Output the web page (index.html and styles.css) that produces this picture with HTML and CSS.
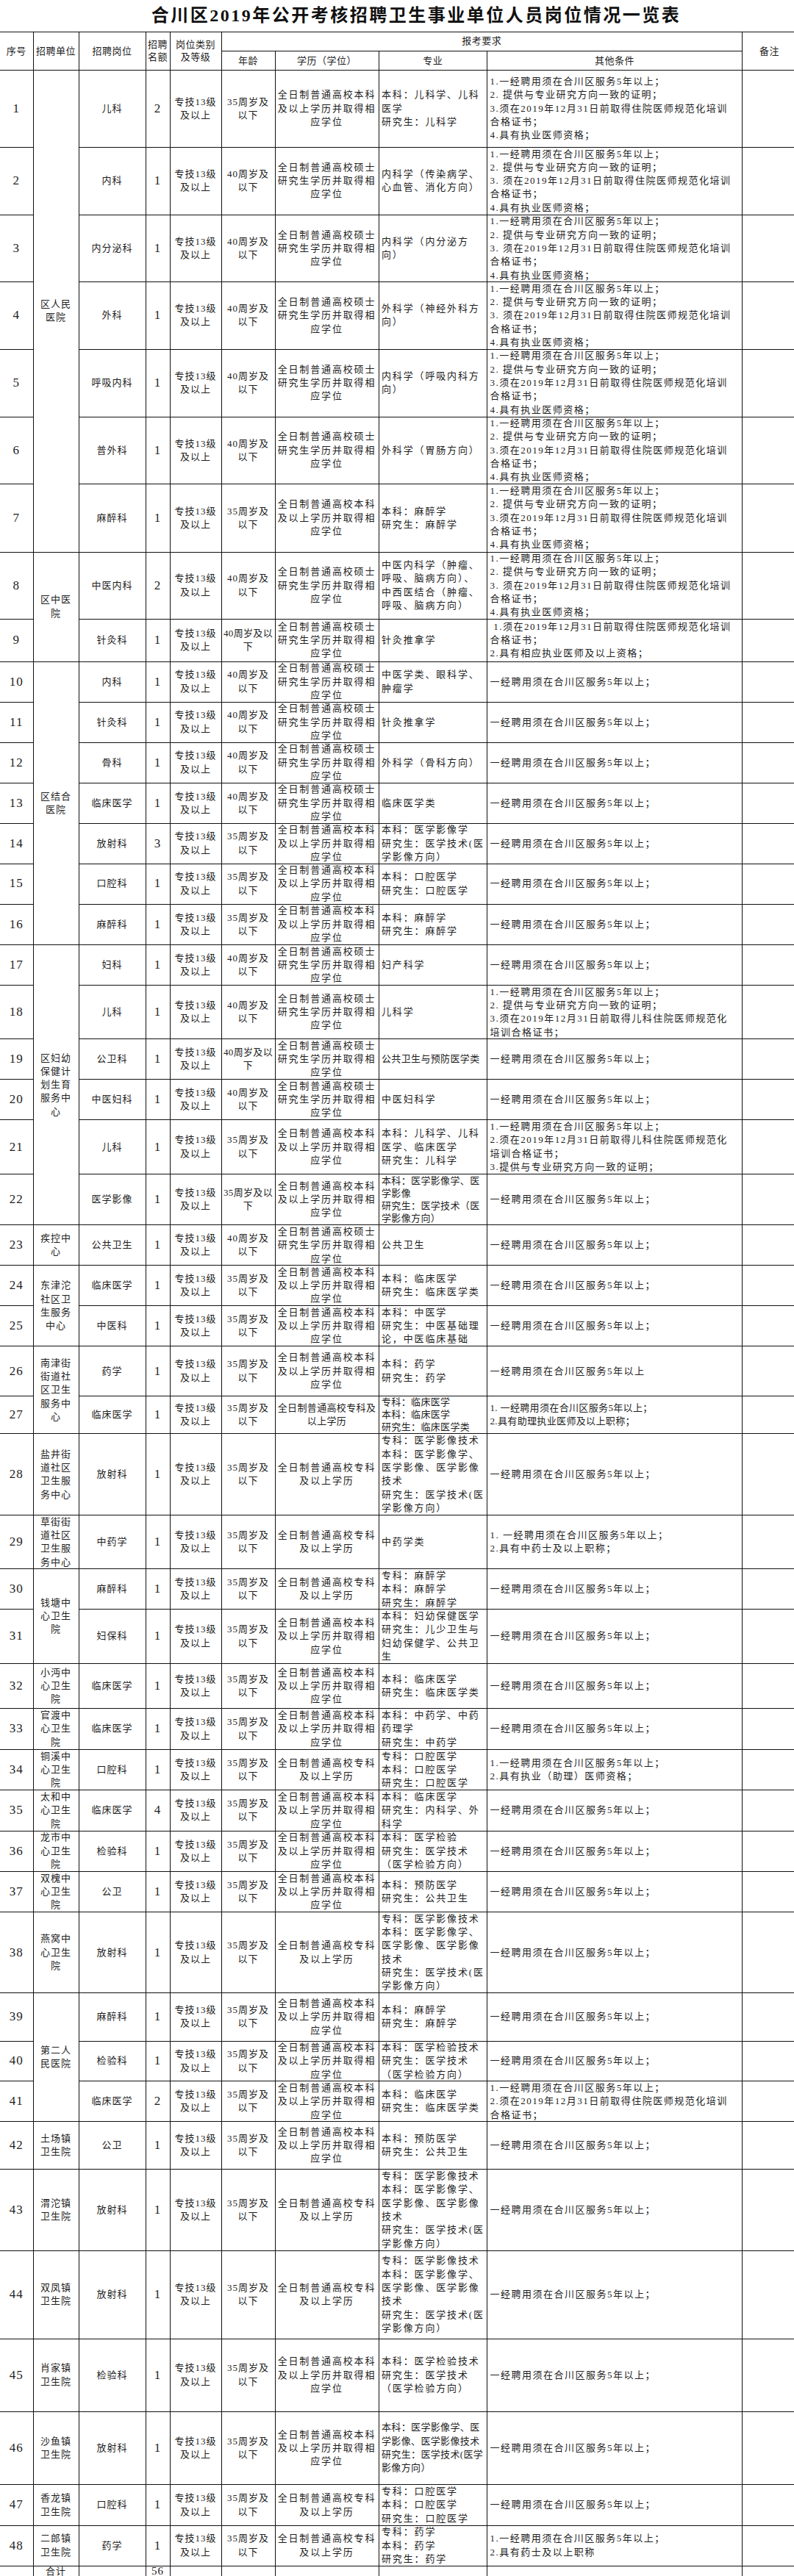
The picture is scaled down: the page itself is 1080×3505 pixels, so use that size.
FILE: index.html
```html
<!DOCTYPE html>
<html lang="zh-CN">
<head>
<meta charset="utf-8">
<title>合川区2019年公开考核招聘卫生事业单位人员岗位情况一览表</title>
<link rel="stylesheet" href="styles.css">
</head>
<body>
<div class="page">
<h1 class="title">合川区2019年公开考核招聘卫生事业单位人员岗位情况一览表</h1>
<div class="sheet">
<div class="hd hs">序号</div>
<div class="hd hs">招聘单位</div>
<div class="hd hs">招聘岗位</div>
<div class="hd hs">招聘
名额</div>
<div class="hd hs">岗位类别
及等级</div>
<div class="hd hc4">报考要求</div>
<div class="hd hs">备注</div>
<div class="hd">年龄</div>
<div class="hd">学历（学位）</div>
<div class="hd">专业</div>
<div class="hd">其他条件</div>

<div class="n">1</div>
<div class="sp7">区人民
医院</div>
<div>儿科</div>
<div class="n">2</div>
<div>专技13级
及以上</div>
<div>35周岁及
以下</div>
<div class="w">全日制普通高校本科
及以上学历并取得相
应学位</div>
<div class="m">本科：儿科学、儿科
医学
研究生：儿科学</div>
<div class="o">1.一经聘用须在合川区服务5年以上；
2. 提供与专业研究方向一致的证明；
3.须在2019年12月31日前取得住院医师规范化培训
合格证书；
4.具有执业医师资格；</div>
<div></div>

<div class="n">2</div>
<div>内科</div>
<div class="n">1</div>
<div>专技13级
及以上</div>
<div>40周岁及
以下</div>
<div class="w">全日制普通高校硕士
研究生学历并取得相
应学位</div>
<div class="m">内科学（传染病学、
心血管、消化方向）</div>
<div class="o">1.一经聘用须在合川区服务5年以上；
2. 提供与专业研究方向一致的证明；
3. 须在2019年12月31日前取得住院医师规范化培训
合格证书；
4.具有执业医师资格；</div>
<div></div>

<div class="n">3</div>
<div>内分泌科</div>
<div class="n">1</div>
<div>专技13级
及以上</div>
<div>40周岁及
以下</div>
<div class="w">全日制普通高校硕士
研究生学历并取得相
应学位</div>
<div class="m">内科学（内分泌方
向）</div>
<div class="o">1.一经聘用须在合川区服务5年以上；
2. 提供与专业研究方向一致的证明；
3. 须在2019年12月31日前取得住院医师规范化培训
合格证书；
4.具有执业医师资格；</div>
<div></div>

<div class="n">4</div>
<div>外科</div>
<div class="n">1</div>
<div>专技13级
及以上</div>
<div>40周岁及
以下</div>
<div class="w">全日制普通高校硕士
研究生学历并取得相
应学位</div>
<div class="m">外科学（神经外科方
向）</div>
<div class="o">1.一经聘用须在合川区服务5年以上；
2. 提供与专业研究方向一致的证明；
3. 须在2019年12月31日前取得住院医师规范化培训
合格证书；
4.具有执业医师资格；</div>
<div></div>

<div class="n">5</div>
<div>呼吸内科</div>
<div class="n">1</div>
<div>专技13级
及以上</div>
<div>40周岁及
以下</div>
<div class="w">全日制普通高校硕士
研究生学历并取得相
应学位</div>
<div class="m">内科学（呼吸内科方
向）</div>
<div class="o">1.一经聘用须在合川区服务5年以上；
2. 提供与专业研究方向一致的证明；
3.须在2019年12月31日前取得住院医师规范化培训
合格证书；
4.具有执业医师资格；</div>
<div></div>

<div class="n">6</div>
<div>普外科</div>
<div class="n">1</div>
<div>专技13级
及以上</div>
<div>40周岁及
以下</div>
<div class="w">全日制普通高校硕士
研究生学历并取得相
应学位</div>
<div class="m">外科学（胃肠方向）</div>
<div class="o">1.一经聘用须在合川区服务5年以上；
2. 提供与专业研究方向一致的证明；
3.须在2019年12月31日前取得住院医师规范化培训
合格证书；
4.具有执业医师资格；</div>
<div></div>

<div class="n">7</div>
<div>麻醉科</div>
<div class="n">1</div>
<div>专技13级
及以上</div>
<div>35周岁及
以下</div>
<div class="w">全日制普通高校本科
及以上学历并取得相
应学位</div>
<div class="m">本科：麻醉学
研究生：麻醉学</div>
<div class="o">1.一经聘用须在合川区服务5年以上；
2. 提供与专业研究方向一致的证明；
3.须在2019年12月31日前取得住院医师规范化培训
合格证书；
4.具有执业医师资格；</div>
<div></div>

<div class="n">8</div>
<div class="sp2">区中医
院</div>
<div>中医内科</div>
<div class="n">2</div>
<div>专技13级
及以上</div>
<div>40周岁及
以下</div>
<div class="w">全日制普通高校硕士
研究生学历并取得相
应学位</div>
<div class="m">中医内科学（肿瘤、
呼吸、脑病方向）、
中西医结合（肿瘤、
呼吸、脑病方向）</div>
<div class="o">1.一经聘用须在合川区服务5年以上；
2. 提供与专业研究方向一致的证明；
3. 须在2019年12月31日前取得住院医师规范化培训
合格证书；
4.具有执业医师资格；</div>
<div></div>

<div class="n">9</div>
<div>针灸科</div>
<div class="n">1</div>
<div>专技13级
及以上</div>
<div class="k">40周岁及以
下</div>
<div class="w">全日制普通高校硕士
研究生学历并取得相
应学位</div>
<div class="m">针灸推拿学</div>
<div class="o"> 1.须在2019年12月31日前取得住院医师规范化培训
合格证书；
2.具有相应执业医师及以上资格；</div>
<div></div>

<div class="n">10</div>
<div class="sp7">区结合
医院</div>
<div>内科</div>
<div class="n">1</div>
<div>专技13级
及以上</div>
<div>40周岁及
以下</div>
<div class="w">全日制普通高校硕士
研究生学历并取得相
应学位</div>
<div class="m">中医学类、眼科学、
肿瘤学</div>
<div class="o">一经聘用须在合川区服务5年以上；</div>
<div></div>

<div class="n">11</div>
<div>针灸科</div>
<div class="n">1</div>
<div>专技13级
及以上</div>
<div>40周岁及
以下</div>
<div class="w">全日制普通高校硕士
研究生学历并取得相
应学位</div>
<div class="m">针灸推拿学</div>
<div class="o">一经聘用须在合川区服务5年以上；</div>
<div></div>

<div class="n">12</div>
<div>骨科</div>
<div class="n">1</div>
<div>专技13级
及以上</div>
<div>40周岁及
以下</div>
<div class="w">全日制普通高校硕士
研究生学历并取得相
应学位</div>
<div class="m">外科学（骨科方向）</div>
<div class="o">一经聘用须在合川区服务5年以上；</div>
<div></div>

<div class="n">13</div>
<div>临床医学</div>
<div class="n">1</div>
<div>专技13级
及以上</div>
<div>40周岁及
以下</div>
<div class="w">全日制普通高校硕士
研究生学历并取得相
应学位</div>
<div class="m">临床医学类</div>
<div class="o">一经聘用须在合川区服务5年以上；</div>
<div></div>

<div class="n">14</div>
<div>放射科</div>
<div class="n">3</div>
<div>专技13级
及以上</div>
<div>35周岁及
以下</div>
<div class="w">全日制普通高校本科
及以上学历并取得相
应学位</div>
<div class="m">本科：医学影像学
研究生：医学技术(医
学影像方向）</div>
<div class="o">一经聘用须在合川区服务5年以上；</div>
<div></div>

<div class="n">15</div>
<div>口腔科</div>
<div class="n">1</div>
<div>专技13级
及以上</div>
<div>35周岁及
以下</div>
<div class="w">全日制普通高校本科
及以上学历并取得相
应学位</div>
<div class="m">本科：口腔医学
研究生：口腔医学</div>
<div class="o">一经聘用须在合川区服务5年以上；</div>
<div></div>

<div class="n">16</div>
<div>麻醉科</div>
<div class="n">1</div>
<div>专技13级
及以上</div>
<div>35周岁及
以下</div>
<div class="w">全日制普通高校本科
及以上学历并取得相
应学位</div>
<div class="m">本科：麻醉学
研究生：麻醉学</div>
<div class="o">一经聘用须在合川区服务5年以上；</div>
<div></div>

<div class="n">17</div>
<div class="sp6">区妇幼
保健计
划生育
服务中
心</div>
<div>妇科</div>
<div class="n">1</div>
<div>专技13级
及以上</div>
<div>40周岁及
以下</div>
<div class="w">全日制普通高校硕士
研究生学历并取得相
应学位</div>
<div class="m">妇产科学</div>
<div class="o">一经聘用须在合川区服务5年以上；</div>
<div></div>

<div class="n">18</div>
<div>儿科</div>
<div class="n">1</div>
<div>专技13级
及以上</div>
<div>40周岁及
以下</div>
<div class="w">全日制普通高校硕士
研究生学历并取得相
应学位</div>
<div class="m">儿科学</div>
<div class="o">1.一经聘用须在合川区服务5年以上；
2. 提供与专业研究方向一致的证明；
3.须在2019年12月31日前取得儿科住院医师规范化
培训合格证书；</div>
<div></div>

<div class="n">19</div>
<div>公卫科</div>
<div class="n">1</div>
<div>专技13级
及以上</div>
<div class="k">40周岁及以
下</div>
<div class="w">全日制普通高校硕士
研究生学历并取得相
应学位</div>
<div class="m k">公共卫生与预防医学类</div>
<div class="o">一经聘用须在合川区服务5年以上；</div>
<div></div>

<div class="n">20</div>
<div>中医妇科</div>
<div class="n">1</div>
<div>专技13级
及以上</div>
<div>40周岁及
以下</div>
<div class="w">全日制普通高校硕士
研究生学历并取得相
应学位</div>
<div class="m">中医妇科学</div>
<div class="o">一经聘用须在合川区服务5年以上；</div>
<div></div>

<div class="n">21</div>
<div>儿科</div>
<div class="n">1</div>
<div>专技13级
及以上</div>
<div>35周岁及
以下</div>
<div class="w">全日制普通高校本科
及以上学历并取得相
应学位</div>
<div class="m">本科：儿科学、儿科
医学、临床医学
研究生：儿科学</div>
<div class="o">1.一经聘用须在合川区服务5年以上；
2.须在2019年12月31日前取得儿科住院医师规范化
培训合格证书；
3.提供与专业研究方向一致的证明；</div>
<div></div>

<div class="n">22</div>
<div>医学影像</div>
<div class="n">1</div>
<div>专技13级
及以上</div>
<div class="k">35周岁及以
下</div>
<div class="w">全日制普通高校本科
及以上学历并取得相
应学位</div>
<div class="m k t17">本科：医学影像学、医
学影像
研究生：医学技术（医
学影像方向）</div>
<div class="o">一经聘用须在合川区服务5年以上；</div>
<div></div>

<div class="n">23</div>
<div>疾控中
心</div>
<div>公共卫生</div>
<div class="n">1</div>
<div>专技13级
及以上</div>
<div>40周岁及
以下</div>
<div class="w">全日制普通高校硕士
研究生学历并取得相
应学位</div>
<div class="m">公共卫生</div>
<div class="o">一经聘用须在合川区服务5年以上；</div>
<div></div>

<div class="n">24</div>
<div class="sp2">东津沱
社区卫
生服务
中心</div>
<div>临床医学</div>
<div class="n">1</div>
<div>专技13级
及以上</div>
<div>35周岁及
以下</div>
<div class="w">全日制普通高校本科
及以上学历并取得相
应学位</div>
<div class="m">本科：临床医学
研究生：临床医学类</div>
<div class="o">一经聘用须在合川区服务5年以上；</div>
<div></div>

<div class="n">25</div>
<div>中医科</div>
<div class="n">1</div>
<div>专技13级
及以上</div>
<div>35周岁及
以下</div>
<div class="w">全日制普通高校本科
及以上学历并取得相
应学位</div>
<div class="m">本科：中医学
研究生：中医基础理
论，中医临床基础</div>
<div class="o">一经聘用须在合川区服务5年以上；</div>
<div></div>

<div class="n">26</div>
<div class="sp2">南津街
街道社
区卫生
服务中
心</div>
<div>药学</div>
<div class="n">1</div>
<div>专技13级
及以上</div>
<div>35周岁及
以下</div>
<div class="w">全日制普通高校本科
及以上学历并取得相
应学位</div>
<div class="m">本科：药学
研究生：药学</div>
<div class="o">一经聘用须在合川区服务5年以上</div>
<div></div>

<div class="n">27</div>
<div>临床医学</div>
<div class="n">1</div>
<div>专技13级
及以上</div>
<div>35周岁及
以下</div>
<div class="w k">全日制普通高校专科及
以上学历</div>
<div class="m k t">专科：临床医学
本科：临床医学
研究生：临床医学类</div>
<div class="o k">1. 一经聘用须在合川区服务5年以上；
2.具有助理执业医师及以上职称；</div>
<div></div>

<div class="n">28</div>
<div>盐井街
道社区
卫生服
务中心</div>
<div>放射科</div>
<div class="n">1</div>
<div>专技13级
及以上</div>
<div>35周岁及
以下</div>
<div class="w">全日制普通高校专科
及以上学历</div>
<div class="m">专科：医学影像技术
本科：医学影像学、
医学影像、医学影像
技术
研究生：医学技术(医
学影像方向）</div>
<div class="o">一经聘用须在合川区服务5年以上；</div>
<div></div>

<div class="n">29</div>
<div>草街街
道社区
卫生服
务中心</div>
<div>中药学</div>
<div class="n">1</div>
<div>专技13级
及以上</div>
<div>35周岁及
以下</div>
<div class="w">全日制普通高校专科
及以上学历</div>
<div class="m">中药学类</div>
<div class="o">1. 一经聘用须在合川区服务5年以上；
2.具有中药士及以上职称；</div>
<div></div>

<div class="n">30</div>
<div class="sp2">钱塘中
心卫生
院</div>
<div>麻醉科</div>
<div class="n">1</div>
<div>专技13级
及以上</div>
<div>35周岁及
以下</div>
<div class="w">全日制普通高校专科
及以上学历</div>
<div class="m">专科：麻醉学
本科：麻醉学
研究生：麻醉学</div>
<div class="o">一经聘用须在合川区服务5年以上；</div>
<div></div>

<div class="n">31</div>
<div>妇保科</div>
<div class="n">1</div>
<div>专技13级
及以上</div>
<div>35周岁及
以下</div>
<div class="w">全日制普通高校本科
及以上学历并取得相
应学位</div>
<div class="m">本科：妇幼保健医学
研究生：儿少卫生与
妇幼保健学、公共卫
生</div>
<div class="o">一经聘用须在合川区服务5年以上；</div>
<div></div>

<div class="n">32</div>
<div>小沔中
心卫生
院</div>
<div>临床医学</div>
<div class="n">1</div>
<div>专技13级
及以上</div>
<div>35周岁及
以下</div>
<div class="w">全日制普通高校本科
及以上学历并取得相
应学位</div>
<div class="m">本科：临床医学
研究生：临床医学类</div>
<div class="o">一经聘用须在合川区服务5年以上；</div>
<div></div>

<div class="n">33</div>
<div>官渡中
心卫生
院</div>
<div>临床医学</div>
<div class="n">1</div>
<div>专技13级
及以上</div>
<div>35周岁及
以下</div>
<div class="w">全日制普通高校本科
及以上学历并取得相
应学位</div>
<div class="m">本科：中药学、中药
药理学
研究生：中药学</div>
<div class="o">一经聘用须在合川区服务5年以上；</div>
<div></div>

<div class="n">34</div>
<div>铜溪中
心卫生
院</div>
<div>口腔科</div>
<div class="n">1</div>
<div>专技13级
及以上</div>
<div>35周岁及
以下</div>
<div class="w">全日制普通高校专科
及以上学历</div>
<div class="m">专科：口腔医学
本科：口腔医学
研究生：口腔医学</div>
<div class="o">1.一经聘用须在合川区服务5年以上；
2.具有执业（助理）医师资格；</div>
<div></div>

<div class="n">35</div>
<div>太和中
心卫生
院</div>
<div>临床医学</div>
<div class="n">4</div>
<div>专技13级
及以上</div>
<div>35周岁及
以下</div>
<div class="w">全日制普通高校本科
及以上学历并取得相
应学位</div>
<div class="m">本科：临床医学
研究生：内科学、外
科学</div>
<div class="o">一经聘用须在合川区服务5年以上；</div>
<div></div>

<div class="n">36</div>
<div>龙市中
心卫生
院</div>
<div>检验科</div>
<div class="n">1</div>
<div>专技13级
及以上</div>
<div>35周岁及
以下</div>
<div class="w">全日制普通高校本科
及以上学历并取得相
应学位</div>
<div class="m">本科：医学检验
研究生：医学技术
（医学检验方向）</div>
<div class="o">一经聘用须在合川区服务5年以上；</div>
<div></div>

<div class="n">37</div>
<div>双槐中
心卫生
院</div>
<div>公卫</div>
<div class="n">1</div>
<div>专技13级
及以上</div>
<div>35周岁及
以下</div>
<div class="w">全日制普通高校本科
及以上学历并取得相
应学位</div>
<div class="m">本科：预防医学
研究生：公共卫生</div>
<div class="o">一经聘用须在合川区服务5年以上；</div>
<div></div>

<div class="n">38</div>
<div>燕窝中
心卫生
院</div>
<div>放射科</div>
<div class="n">1</div>
<div>专技13级
及以上</div>
<div>35周岁及
以下</div>
<div class="w">全日制普通高校专科
及以上学历</div>
<div class="m">专科：医学影像技术
本科：医学影像学、
医学影像、医学影像
技术
研究生：医学技术(医
学影像方向）</div>
<div class="o">一经聘用须在合川区服务5年以上；</div>
<div></div>

<div class="n">39</div>
<div class="sp3">第二人
民医院</div>
<div>麻醉科</div>
<div class="n">1</div>
<div>专技13级
及以上</div>
<div>35周岁及
以下</div>
<div class="w">全日制普通高校本科
及以上学历并取得相
应学位</div>
<div class="m">本科：麻醉学
研究生：麻醉学</div>
<div class="o">一经聘用须在合川区服务5年以上；</div>
<div></div>

<div class="n">40</div>
<div>检验科</div>
<div class="n">1</div>
<div>专技13级
及以上</div>
<div>35周岁及
以下</div>
<div class="w">全日制普通高校本科
及以上学历并取得相
应学位</div>
<div class="m">本科：医学检验技术
研究生：医学技术
（医学检验方向）</div>
<div class="o">一经聘用须在合川区服务5年以上；</div>
<div></div>

<div class="n">41</div>
<div>临床医学</div>
<div class="n">2</div>
<div>专技13级
及以上</div>
<div>35周岁及
以下</div>
<div class="w">全日制普通高校本科
及以上学历并取得相
应学位</div>
<div class="m">本科：临床医学
研究生：临床医学类</div>
<div class="o">1.一经聘用须在合川区服务5年以上；
2.须在2019年12月31日前取得住院医师规范化培训
合格证书；</div>
<div></div>

<div class="n">42</div>
<div>土场镇
卫生院</div>
<div>公卫</div>
<div class="n">1</div>
<div>专技13级
及以上</div>
<div>35周岁及
以下</div>
<div class="w">全日制普通高校本科
及以上学历并取得相
应学位</div>
<div class="m">本科：预防医学
研究生：公共卫生</div>
<div class="o">一经聘用须在合川区服务5年以上；</div>
<div></div>

<div class="n">43</div>
<div>渭沱镇
卫生院</div>
<div>放射科</div>
<div class="n">1</div>
<div>专技13级
及以上</div>
<div>35周岁及
以下</div>
<div class="w">全日制普通高校专科
及以上学历</div>
<div class="m">专科：医学影像技术
本科：医学影像学、
医学影像、医学影像
技术
研究生：医学技术(医
学影像方向）</div>
<div class="o">一经聘用须在合川区服务5年以上；</div>
<div></div>

<div class="n">44</div>
<div>双凤镇
卫生院</div>
<div>放射科</div>
<div class="n">1</div>
<div>专技13级
及以上</div>
<div>35周岁及
以下</div>
<div class="w">全日制普通高校专科
及以上学历</div>
<div class="m">专科：医学影像技术
本科：医学影像学、
医学影像、医学影像
技术
研究生：医学技术(医
学影像方向）</div>
<div class="o">一经聘用须在合川区服务5年以上；</div>
<div></div>

<div class="n">45</div>
<div>肖家镇
卫生院</div>
<div>检验科</div>
<div class="n">1</div>
<div>专技13级
及以上</div>
<div>35周岁及
以下</div>
<div class="w">全日制普通高校本科
及以上学历并取得相
应学位</div>
<div class="m">本科：医学检验技术
研究生：医学技术
（医学检验方向）</div>
<div class="o">一经聘用须在合川区服务5年以上；</div>
<div></div>

<div class="n">46</div>
<div>沙鱼镇
卫生院</div>
<div>放射科</div>
<div class="n">1</div>
<div>专技13级
及以上</div>
<div>35周岁及
以下</div>
<div class="w">全日制普通高校本科
及以上学历并取得相
应学位</div>
<div class="m k">本科：医学影像学、医
学影像、医学影像技术
研究生：医学技术(医学
影像方向）</div>
<div class="o">一经聘用须在合川区服务5年以上；</div>
<div></div>

<div class="n">47</div>
<div>香龙镇
卫生院</div>
<div>口腔科</div>
<div class="n">1</div>
<div>专技13级
及以上</div>
<div>35周岁及
以下</div>
<div class="w">全日制普通高校专科
及以上学历</div>
<div class="m">专科：口腔医学
本科：口腔医学
研究生：口腔医学</div>
<div class="o">一经聘用须在合川区服务5年以上；</div>
<div></div>

<div class="n">48</div>
<div>二郎镇
卫生院</div>
<div>药学</div>
<div class="n">1</div>
<div>专技13级
及以上</div>
<div>35周岁及
以下</div>
<div class="w">全日制普通高校专科
及以上学历</div>
<div class="m">专科：药学
本科：药学
研究生：药学</div>
<div class="o">1.一经聘用须在合川区服务5年以上；
2.具有药士及以上职称</div>
<div></div>

<div class="f"></div>
<div class="f">合计</div>
<div class="f"></div>
<div class="f fn">56</div>
<div class="f"></div>
<div class="f"></div>
<div class="f"></div>
<div class="f"></div>
<div class="f"></div>
<div class="f"></div>
</div>
</div>
</body>
</html>
```

FILE: styles.css
```css
body {
  margin: 0;
  background: #ffffff;
}

.page {
  width: 1080px;
  height: 3505px;
  overflow: hidden;
  color: #1e1e1e;
  font-family: "Liberation Serif", "Noto Sans CJK SC", serif;
}

.title {
  margin: 0;
  width: 1132px;
  height: 42.6px;
  line-height: 42.6px;
  text-align: center;
  font-size: 24px;
  font-weight: 700;
  letter-spacing: 2.5px;
  color: #111111;
  white-space: nowrap;
}

.sheet {
  display: grid;
  width: 1084px;
  grid-template-columns: 45.5px 62px 91px 33px 70px 73px 141px 147.5px 347px 74px;
  grid-template-rows:
    26px 26.7px
    104.3px 92.4px 91.3px 91.3px 92px 91.7px 92.3px 91.4px 57.6px 55.4px
    54.6px 55.4px 55px 54.6px 55px 55.7px 55px 73.3px 54.7px 55.3px
    73.4px 69.6px 55px 54.4px 55.6px 67.7px 51.3px 110.7px 73.3px 55px
    73.4px 61.5px 55.5px 55.3px 55.7px 55.3px 55.3px 109.7px 65.7px 54.6px
    55px 65px 110.4px 120px 99px 99.6px 55.4px 55px
    13px;
  border-top: 1px solid #111111;
  font-size: 13px;
  line-height: 18.3px;
}

.sheet > * {
  box-sizing: border-box;
  display: flex;
  align-items: center;
  justify-content: center;
  text-align: center;
  white-space: pre;
  border-right: 1px solid #111111;
  border-bottom: 1px solid #111111;
  letter-spacing: 1px;
}

.hd {
  letter-spacing: 0.5px;
  line-height: 17.6px;
}

.hs {
  grid-row: span 2;
}

.hc4 {
  grid-column: span 4;
}

.sp2 {
  grid-row: span 2;
}

.sp3 {
  grid-row: span 3;
}

.sp6 {
  grid-row: span 6;
}

.sp7 {
  grid-row: span 7;
}

.n {
  font-size: 17px;
}

.w {
  letter-spacing: 1.85px;
}

.m {
  justify-content: flex-start;
  text-align: left;
  padding-left: 3.5px;
  letter-spacing: 1.85px;
}

.o {
  justify-content: flex-start;
  text-align: left;
  padding-left: 3.5px;
  letter-spacing: 1.5px;
}

.k {
  letter-spacing: 0.35px;
}

.t {
  line-height: 16.6px;
}

.t17 {
  line-height: 17px;
}

.f {
  border-bottom: none;
  line-height: 13px;
  align-items: flex-end;
}

.fn {
  font-size: 15px;
}
```
